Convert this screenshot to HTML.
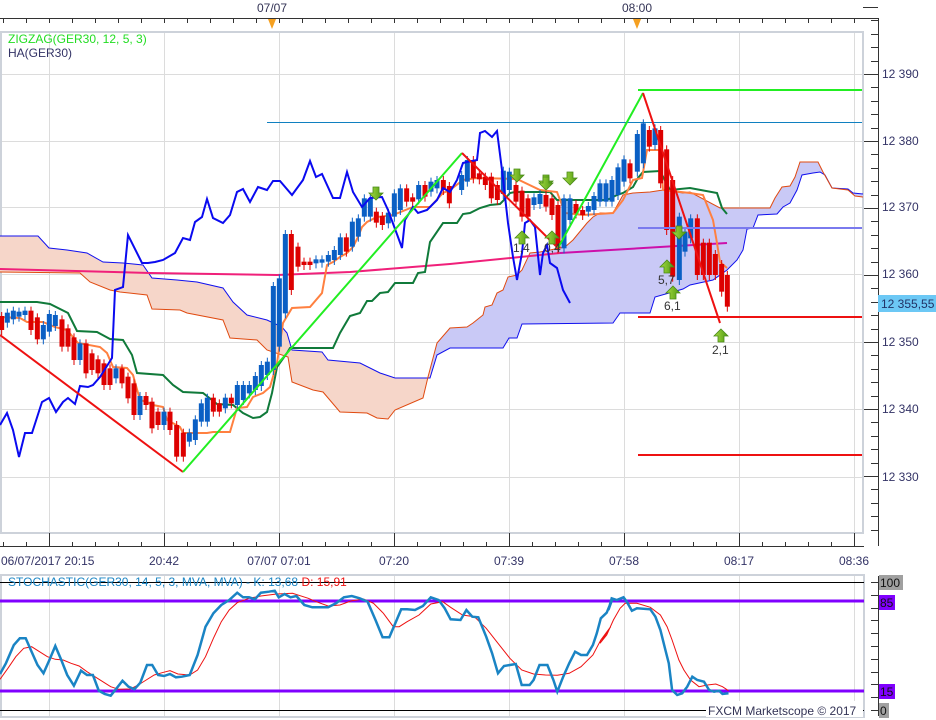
<!DOCTYPE html>
<html><head><meta charset="utf-8"><style>
html,body{margin:0;padding:0;background:#fff;}
svg{display:block;font-family:"Liberation Sans",sans-serif;}
</style></head><body>
<svg id="s" width="936" height="720" viewBox="0 0 936 720" xmlns="http://www.w3.org/2000/svg">
<defs>
<clipPath id="cl"><rect x="0" y="0" width="431" height="540"/></clipPath>
<clipPath id="cr"><rect x="431" y="0" width="440" height="540"/></clipPath>
<clipPath id="cp"><rect x="0" y="32" width="863" height="500"/></clipPath>
<clipPath id="cs"><rect x="0" y="576" width="864" height="140"/></clipPath>
<linearGradient id="ag" x1="0" y1="0" x2="1" y2="0"><stop offset="0" stop-color="#a8dc40"/><stop offset="1" stop-color="#4e9a14"/></linearGradient>
</defs>
<rect width="936" height="720" fill="#fff"/>
<!-- top axis -->
<line x1="0" y1="18.5" x2="878" y2="18.5" stroke="#333" stroke-width="1"/>
<g id="toptk" stroke="#333"></g>
<text x="272" y="12" font-size="12" fill="#333355" text-anchor="middle">07/07</text>
<text x="637" y="12" font-size="12" fill="#333355" text-anchor="middle">08:00</text>
<polygon points="268,19 276,19 272,29" fill="#f5a020"/>
<polygon points="633,19 641,19 637,29" fill="#f5a020"/>
<!-- right axis -->
<line x1="878.5" y1="18" x2="878.5" y2="546" stroke="#333"/>
<g id="rtk" stroke="#333"></g>
<g font-size="12" fill="#333366">
<text x="882" y="78">12 390</text><text x="882" y="145">12 380</text><text x="882" y="211">12 370</text>
<text x="882" y="278">12 360</text><text x="882" y="346">12 350</text><text x="882" y="413">12 340</text><text x="882" y="481">12 330</text>
</g>
<rect x="878" y="295" width="58" height="17" fill="#6cc8f5"/>
<text x="881" y="308" font-size="12" fill="#223366">12 355,55</text>
<!-- plot gridlines -->
<g stroke="#dcdcdc" stroke-width="1" id="grid"></g>
<rect x="1" y="32" width="862" height="501" fill="none" stroke="#cdd2da" stroke-width="2"/>
<g clip-path="url(#cp)">
<g clip-path="url(#cl)"><polygon id="cloudL" fill="#f6d6c9"/></g>
<g clip-path="url(#cr)"><polygon id="cloudR" fill="#c9c9f6"/></g>
<polyline fill="none" stroke="#1010ee" stroke-width="1" points="0,236 38,236 49,248 67,250 87,253 103,262 123,263 143,265 152,278 177,280 197,282 223,288 233,302 247,315 267,320 282,327 287,333 292,350 322,352 328,360 360,363 380,373 395,378 430,378 437,355 450,348 503,348 509,338 517,338 522,324 613,323 620,313 650,313 655,297 683,289 690,285 713,280 727,270 737,260 743,250 747,229 753,228 758,215 777,214 783,207 790,203 797,190 802,175 813,173 820,172 825,175 832,188 848,189 853,193 863,194"/>
<polyline fill="none" stroke="#e04a10" stroke-width="1" points="0,272 80,273 90,282 110,290 120,292 147,295 152,309 180,310 187,313 223,320 230,338 257,340 267,350 288,357 292,382 313,390 323,392 340,412 367,413 377,418 388,419 395,410 423,398 428,377 437,343 450,328 467,327 473,323 483,315 485,307 492,305 497,293 503,290 508,277 517,275 522,270 530,253 540,252 550,250 565,247 573,240 587,223 593,217 600,213 613,213 623,195 633,193 650,192 663,190 683,193 690,192 720,208 770,208 775,198 782,187 790,186 795,177 800,162 818,162 823,172 832,188 848,190 855,196 863,197"/>
<line x1="267" y1="122.5" x2="862" y2="122.5" stroke="#1080c0" stroke-width="1"/>
<polyline fill="none" stroke="#f0207a" stroke-width="2" points="0,269 150,273 277,275 350,272 450,264 560,253"/>
<polyline fill="none" stroke="#cc10aa" stroke-width="2" points="560,253 727,243"/>
<polyline fill="none" stroke="#107a3a" stroke-width="2" points="0,302 37,302 50,304 68,313 77,331 97,332 110,339 123,340 132,355 137,373 163,375 173,385 183,392 203,393 217,404 233,405 243,413 253,418 260,417 267,412 272,393 277,367 287,353 290,348 333,348 340,333 350,316 360,313 367,301 372,301 380,293 388,292 395,283 413,283 418,273 425,272 430,242 443,223 450,223 457,223 463,214 470,213 480,208 490,205 500,204 503,201 510,193 515,192 550,192 557,200 607,200 617,195 623,193 633,187 638,178 643,172 660,171 670,190 690,188 717,193 722,208 727,214"/>
<polyline fill="none" stroke="#ff8040" stroke-width="2" points="0,317 20,318 27,322 43,322 55,327 67,330 78,343 100,347 107,353 113,367 127,368 133,375 140,400 147,402 153,405 163,407 167,420 180,427 183,433 207,433 213,432 230,432 237,408 247,407 253,397 263,393 270,387 277,363 283,323 292,308 310,307 322,293 327,265 333,262 340,257 347,253 353,247 358,237 362,227 367,222 377,217 393,215 413,207 430,207 443,193 450,190 463,180 477,178 517,179 540,190 557,192 565,213 583,215 613,213 623,200 633,180 642,178 647,150 660,150 663,190 690,193 703,195 713,220 717,243 720,262 727,268"/>
<g id="candles"></g>
<polyline fill="none" stroke="#0a0af0" stroke-width="2" points="0,425 7,413 13,430 19,457 25,433 32,433 42,402 49,398 56,412 63,402 68,398 75,404 80,386 88,387 93,385 100,377 112,358 115,290 123,287 128,235 142,263 148,263 155,262 163,260 175,253 183,238 190,240 195,222 202,217 207,199 213,218 223,223 230,215 237,192 243,189 250,202 258,187 267,190 273,181 280,181 292,195 303,180 310,161 316,177 322,174 333,198 340,198 347,172 353,192 362,207 370,198 382,197 388,210 398,237 402,248 405,220 413,207 418,213 427,210 437,200 443,188 450,192 457,180 463,163 467,162 477,160 480,133 485,131 492,137 497,131 502,170 508,223 513,257 517,280 522,253 525,223 530,220 535,227 540,275 543,253 547,245 550,263 557,268 563,290 570,303"/>
<polyline fill="none" stroke="#ee1111" stroke-width="2" points="0,335 183,472"/>
<polyline fill="none" stroke="#22ee22" stroke-width="2" points="183,472 462,153"/>
<polyline fill="none" stroke="#ee1111" stroke-width="2" points="462,153 558,248"/>
<polyline fill="none" stroke="#22ee22" stroke-width="2" points="558,248 643,93"/>
<polyline fill="none" stroke="#ee1111" stroke-width="2" points="643,93 720,323"/>
<line x1="638" y1="90" x2="862" y2="90" stroke="#22ee22" stroke-width="2"/>
<line x1="638" y1="228" x2="862" y2="228" stroke="#7a7aee" stroke-width="2"/>
<line x1="638" y1="317" x2="862" y2="317" stroke="#ee1111" stroke-width="2"/>
<line x1="638" y1="455" x2="862" y2="455" stroke="#ee1111" stroke-width="2"/>
<g id="arrows"></g>
<g font-size="12" fill="#333">
<text x="513" y="252">1,4</text><text x="544" y="252">0,4</text><text x="658" y="284">5,7</text><text x="664" y="310">6,1</text><text x="712" y="354">2,1</text>
</g>
</g>
<text x="8" y="43" font-size="12" fill="#22dd22">ZIGZAG(GER30, 12, 5, 3)</text>
<text x="8" y="57" font-size="12" fill="#333366">HA(GER30)</text>
<!-- bottom axis -->
<line x1="0" y1="546.5" x2="864" y2="546.5" stroke="#333"/>
<g id="btk" stroke="#333"></g>
<g font-size="12" fill="#333366">
<text x="1" y="565">06/07/2017 20:15</text>
<text x="164" y="565" text-anchor="middle">20:42</text>
<text x="279" y="565" text-anchor="middle">07/07 07:01</text>
<text x="394" y="565" text-anchor="middle">07:20</text>
<text x="509" y="565" text-anchor="middle">07:39</text>
<text x="624" y="565" text-anchor="middle">07:58</text>
<text x="739" y="565" text-anchor="middle">08:17</text>
<text x="854" y="565" text-anchor="middle">08:36</text>
</g>
<!-- stochastic -->
<g stroke="#dcdcdc" id="sgrid"></g>
<rect x="1" y="575" width="863" height="142" fill="none" stroke="#cdd2da" stroke-width="2"/>
<line x1="0" y1="582.5" x2="864" y2="582.5" stroke="#000"/>
<line x1="0" y1="710.5" x2="864" y2="710.5" stroke="#000"/>
<line x1="0" y1="601" x2="864" y2="601" stroke="#8000ff" stroke-width="3"/>
<line x1="0" y1="691" x2="864" y2="691" stroke="#8000ff" stroke-width="3"/>
<g clip-path="url(#cs)">
<polyline id="kD" fill="none" stroke="#ee1111" stroke-width="1"/>
<polyline id="kK" fill="none" stroke="#1a84c4" stroke-width="2.5"/>
</g>
<text x="8" y="586" font-size="12" fill="#1a84c4">STOCHASTIC(GER30, 14, 5, 3, MVA, MVA) -  K: 13,68 <tspan fill="#ee1111">D: 15,91</tspan></text>
<rect x="706" y="701" width="157" height="16" fill="#fff"/>
<text x="708" y="715" font-size="12" fill="#333355">FXCM Marketscope © 2017</text>
<line x1="878.5" y1="576" x2="878.5" y2="716" stroke="#333"/>
<g id="stk" stroke="#333"></g>
<rect x="879" y="575" width="24" height="15" fill="#a0a0a0"/><text x="880" y="587" font-size="12" fill="#111">100</text>
<rect x="879" y="595" width="16" height="15" fill="#8000ff"/><text x="880" y="607" font-size="12" fill="#111">85</text>
<rect x="879" y="684" width="16" height="15" fill="#8000ff"/><text x="880" y="696" font-size="12" fill="#111">15</text>
<rect x="879" y="703" width="10" height="15" fill="#a0a0a0"/><text x="880" y="715" font-size="12" fill="#111">0</text>
</svg>
<script>
var NS="http://www.w3.org/2000/svg";
function el(p,t,a){var e=document.createElementNS(NS,t);for(var k in a)e.setAttribute(k,a[k]);document.getElementById(p).appendChild(e);return e;}
// grid
[49,164,279,394,509,624,739,854].forEach(function(x){el('grid','line',{x1:x+.5,y1:32,x2:x+.5,y2:532});el('sgrid','line',{x1:x+.5,y1:576,x2:x+.5,y2:716});});
[74,141,207,274,342,409,477].forEach(function(y){el('grid','line',{x1:0,y1:y+.5,x2:862,y2:y+.5});});
// right ticks
for(var y=7;y<=532;y+=13.4){var maj=Math.abs(((y-74)/67)-Math.round((y-74)/67))<0.05;el('rtk','line',{x1:maj?863:871,y1:Math.round(y)+.5,x2:878,y2:Math.round(y)+.5});}
for(var x=3;x<864;x+=23){var m=[49,164,279,394,509,624,739,854].some(function(v){return Math.abs(v-x)<8;});}
for(var i=0;i<40;i++){var x=49+i*23-115*2;}
for(var x=3.5;x<864;x+=23){el('toptk','line',{x1:x,y1:18,x2:x,y2:23});el('btk','line',{x1:x,y1:542,x2:x,y2:546});}
[49,164,279,394,509,624,739,854].forEach(function(x){el('btk','line',{x1:x+.5,y1:533,x2:x+.5,y2:546});});
for(var y=582;y<=711;y+=12.8){el('stk','line',{x1:871,y1:Math.round(y)+.5,x2:878,y2:Math.round(y)+.5});}
// cloud
var A="0,236 38,236 49,248 67,250 87,253 103,262 123,263 143,265 152,278 177,280 197,282 223,288 233,302 247,315 267,320 282,327 287,333 292,350 322,352 328,360 360,363 380,373 395,378 430,378 437,355 450,348 503,348 509,338 517,338 522,324 613,323 620,313 650,313 655,297 683,289 690,285 713,280 727,270 737,260 743,250 747,229 753,228 758,215 777,214 783,207 790,203 797,190 802,175 813,173 820,172 825,175 832,188 848,189 853,193 863,194";
var B="0,272 80,273 90,282 110,290 120,292 147,295 152,309 180,310 187,313 223,320 230,338 257,340 267,350 288,357 292,382 313,390 323,392 340,412 367,413 377,418 388,419 395,410 423,398 428,377 437,343 450,328 467,327 473,323 483,315 485,307 492,305 497,293 503,290 508,277 517,275 522,270 530,253 540,252 550,250 565,247 573,240 587,223 593,217 600,213 613,213 623,195 633,193 650,192 663,190 683,193 690,192 720,208 770,208 775,198 782,187 790,186 795,177 800,162 818,162 823,172 832,188 848,190 855,196 863,197";
var poly=A+" "+B.split(" ").reverse().join(" ");
document.getElementById('cloudL').setAttribute('points',poly);
document.getElementById('cloudR').setAttribute('points',poly);
// candles: zoom3 [zx,y1,y2,c] ; zoom4 same with flag
var c3=[[5,648,690,'r'],[22,638,668,'b'],[40,632,658,'b'],[57,635,650,'b'],[75,632,645,'b'],[93,632,690,'r'],[112,652,718,'r'],[130,675,718,'b'],[148,642,695,'b'],[166,645,678,'b'],[186,658,740,'r'],[204,685,740,'r'],[222,712,780,'r'],[240,730,780,'b'],[258,730,820,'r'],[276,760,810,'r'],[294,778,820,'r'],[312,790,855,'r'],[330,805,855,'r'],[348,805,835,'b'],[366,805,850,'r'],[384,830,895,'r'],[402,850,945,'r'],[420,888,945,'b'],[438,888,915,'r'],[456,905,985,'r'],[474,935,975,'r'],[492,935,975,'b'],[510,935,990,'r'],[530,975,1070,'r'],[550,998,1070,'r'],[568,998,1025,'b'],[586,958,1020,'b'],[604,910,965,'b'],[622,893,965,'b'],[640,893,935,'r'],[658,910,935,'r'],[676,893,925,'b'],[694,893,910,'r'],[712,855,915,'b'],[730,855,900,'b'],[748,855,880,'b'],[766,828,870,'b'],[784,795,858,'b'],[802,785,825,'b'],[820,558,810,'b'],[838,535,740,'b'],[856,402,640,'b'],[874,402,570,'r'],[894,440,500,'r'],[912,485,495,'r'],[930,485,495,'r'],[948,478,490,'b'],[966,478,488,'b'],[985,465,485,'b'],[1003,450,480,'b'],[1021,412,465,'b'],[1039,412,455,'r'],[1057,365,440,'b'],[1075,355,410,'b'],[1093,295,350,'b'],[1111,295,350,'b'],[1129,335,368,'r'],[1147,348,375,'r'],[1165,338,370,'b'],[1183,280,350,'b'],[1201,265,330,'b'],[1220,265,305,'r'],[1238,292,305,'r'],[1256,255,298,'b'],[1275,255,290,'r'],[1293,245,275,'b'],[1311,240,265,'b'],[1330,240,270,'r'],[1348,258,310,'r']];
var c4=[[35,285,330,'b'],[52,240,305,'b'],[70,240,295,'r'],[88,280,298,'r'],[106,290,315,'r'],[124,290,355,'r'],[142,315,360,'r'],[160,272,342,'b'],[178,275,330,'b'],[198,315,365,'r'],[216,332,410,'r'],[234,355,410,'r'],[252,352,375,'b'],[270,342,372,'b'],[288,345,380,'r'],[306,355,405,'r'],[324,375,505,'r'],[342,355,505,'b'],[360,355,420,'b'],[378,372,400,'r'],[398,390,405,'r'],[415,378,395,'b'],[432,348,390,'b'],[450,310,365,'b'],[468,310,365,'b'],[486,300,365,'b'],[504,262,345,'b'],[522,238,305,'b'],[540,250,295,'r'],[562,162,275,'b'],[580,130,250,'b'],[598,150,200,'r'],[615,145,195,'b'],[632,150,310,'r'],[650,208,450,'r'],[668,300,590,'r'],[688,410,600,'b'],[705,455,515,'b'],[722,415,475,'b'],[742,415,585,'r'],[760,488,585,'r'],[778,488,585,'r'],[796,522,585,'r'],[815,552,635,'r'],[832,585,680,'r']];
function cand(x,y1,y2,c){var col=c=='r'?'#dd0000':'#0a5fc4';el('candles','line',{x1:x,y1:y1-4,x2:x,y2:y2+5,stroke:col,'stroke-width':1});el('candles','rect',{x:x-2.5,y:y1,width:5,height:Math.max(2,y2-y1),fill:col});}
c3.forEach(function(a){cand(a[0]/3,a[1]/3+100,a[2]/3+100,a[3]);});
c4.forEach(function(a){cand(a[0]/3+450,a[1]/3+80,a[2]/3+80,a[3]);});
// arrows
function arr(cx,t,down){var p;if(down)p=[[cx-3,t],[cx+3,t],[cx+3,t+6],[cx+7,t+6],[cx,t+13],[cx-7,t+6],[cx-3,t+6]];else p=[[cx,t],[cx+7,t+7],[cx+3,t+7],[cx+3,t+13],[cx-3,t+13],[cx-3,t+7],[cx-7,t+7]];el('arrows','polygon',{points:p.map(function(q){return q.join(',')}).join(' '),fill:'url(#ag)',stroke:'#4a8a18','stroke-width':0.8});}
arr(376,187,1);arr(517,169,1);arr(546,175,1);arr(570,172,1);arr(679,226,1);arr(546,177,1);
arr(522,231,0);arr(552,231,0);arr(667,260,0);arr(673,286,0);arr(721,329,0);
// stochastic
function conv(s,sx,ox){return s.trim().split(/\s+/).map(function(p){var v=p.split(',');return (v[0]/sx+ox).toFixed(1)+','+(v[1]/3+520).toFixed(1);}).join(' ');}
var K5="0,462 15,430 35,375 50,355 65,355 80,395 95,435 110,460 125,420 140,378 155,420 170,465 187,497 205,452 220,465 235,465 250,512 265,522 280,527 295,505 310,482 325,500 340,508 355,488 372,435 385,435 400,465 415,468 430,462 445,472 460,470 480,465 500,405 520,320 540,280 560,255 580,240 600,218 615,232 630,232 645,238 660,218 680,215 695,212 705,232 720,222 735,232 750,228 770,255 790,262 830,262 850,250 870,232 890,228 910,235 930,245 950,300 968,352 985,352 1000,310 1015,268 1030,268 1050,270 1070,258 1090,232 1110,240 1125,265 1140,298 1165,300 1180,270 1195,290 1210,292 1230,350 1245,400 1260,460 1275,438 1305,432 1320,495 1340,495 1350,480 1365,435 1385,435 1400,480 1410,515 1425,470 1440,430 1455,395 1470,405 1485,405 1500,375 1510,340 1520,295 1535,278 1550,235";
var K2="25,270 35,235 50,240 70,232 80,245 95,272 110,265 150,268 165,290 180,330 195,390 205,430 215,510 230,525 245,520 260,500 275,470 290,480 310,485 325,510 340,515 355,512 365,522 383,520";
var D5="0,478 20,445 40,410 60,385 80,380 100,395 120,410 140,418 160,420 180,430 200,438 220,455 240,470 260,485 280,500 300,508 330,507 350,495 370,480 390,465 410,458 430,452 450,462 480,465 500,450 520,410 540,355 560,305 580,270 600,248 630,235 660,228 700,222 740,220 780,235 800,245 830,258 860,255 890,242 920,237 945,250 970,280 995,320 1010,320 1030,305 1060,285 1090,252 1120,245 1140,262 1170,285 1200,290 1230,325 1260,370 1290,415 1320,450 1350,462 1380,465 1410,466 1440,460 1470,440 1500,405 1520,360 1545,320";
var D2="0,370 20,345 40,300 60,265 75,250 110,250 150,262 180,285 200,320 215,360 235,420 250,450 270,480 295,500 320,495 345,492 365,500 383,512";
document.getElementById('kK').setAttribute('points',conv(K5,2.53,0)+' '+conv(K2,2.98,600));
document.getElementById('kD').setAttribute('points',conv(D5,2.53,0)+' '+conv(D2,2.98,600));
</script>
</body></html>
